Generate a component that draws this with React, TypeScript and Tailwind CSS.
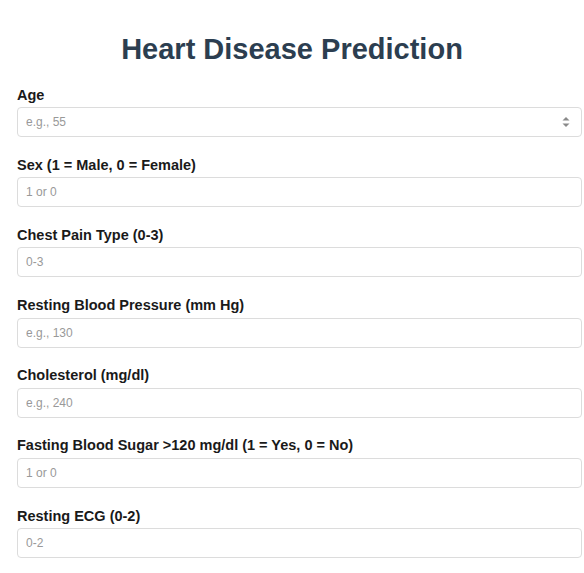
import React from "react";

const fields: { label: string; placeholder: string; spinner?: boolean }[] = [
  { label: "Age", placeholder: "e.g., 55", spinner: true },
  { label: "Sex (1 = Male, 0 = Female)", placeholder: "1 or 0" },
  { label: "Chest Pain Type (0-3)", placeholder: "0-3" },
  { label: "Resting Blood Pressure (mm Hg)", placeholder: "e.g., 130" },
  { label: "Cholesterol (mg/dl)", placeholder: "e.g., 240" },
  { label: "Fasting Blood Sugar >120 mg/dl (1 = Yes, 0 = No)", placeholder: "1 or 0" },
  { label: "Resting ECG (0-2)", placeholder: "0-2" },
];

export default function App() {
  return (
    <div
      className="w-[584px] h-[573px] overflow-hidden bg-white"
      style={{ fontFamily: '"Liberation Sans", Arial, sans-serif' }}
    >
      <h1 className="pt-[32px] text-center text-[29px] leading-[34px] font-bold text-[#2c3e50] mb-[20.5px]">
        Heart Disease Prediction
      </h1>
      <div className="pl-[17px] w-[582px] flex flex-col gap-[19.7px]">
        {fields.map((f) => (
          <div key={f.label} className="flex flex-col">
            <label className="block text-[14.5px] leading-[17px] font-bold text-[#1a1a1a] mb-[3.5px]">
              {f.label}
            </label>
            <div className="relative">
              <input
                type="text"
                placeholder={f.placeholder}
                className="block w-full h-[30px] border border-[#dcdcdc] rounded-[4px] bg-white px-[8px] text-[12px] text-[#333] placeholder:text-[#999] outline-none"
              />
              {f.spinner && (
                <svg
                  className="absolute right-[12px] top-[8.5px]"
                  width="8"
                  height="12"
                  viewBox="0 0 8 12"
                >
                  <path d="M4 1 L7.5 4.5 L0.5 4.5 Z" fill="#8a8a8a" />
                  <path d="M4 11 L7.5 7.5 L0.5 7.5 Z" fill="#8a8a8a" />
                </svg>
              )}
            </div>
          </div>
        ))}
      </div>
    </div>
  );
}
